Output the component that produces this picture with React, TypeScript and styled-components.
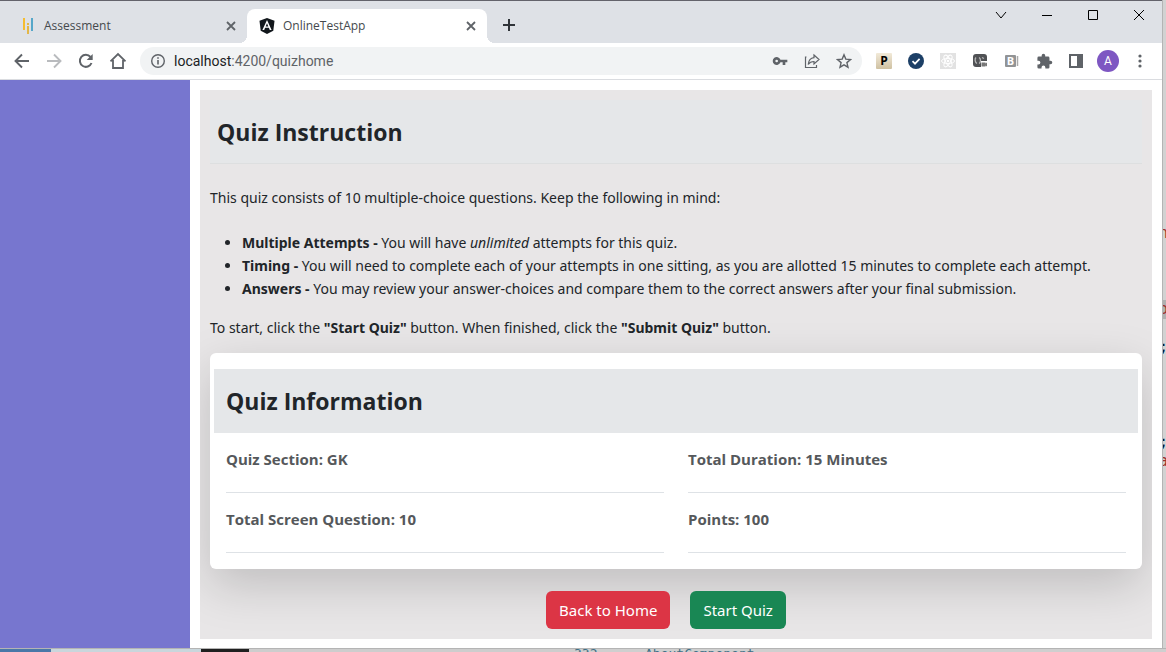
import React from "react";
import styled, { createGlobalStyle } from "styled-components";

const Global = createGlobalStyle`
  *, *::before, *::after { box-sizing: border-box; }
  html, body { margin: 0; padding: 0; }
  body {
    background: #cfcfcf;
    color: #212529;
    font-family: "Open Sans", "Noto Sans", sans-serif;
    font-size: 14px;
  }
  button, input { font: inherit; }
`;

const Desktop = styled.div`
  min-height: 100vh;
  display: grid;
  grid-template-columns: minmax(0, 1fr) 4px;
  grid-template-rows: 1fr 4px;
`;

const BrowserWindow = styled.div`
  display: flex;
  flex-direction: column;
  min-width: 0;
  background: #fff;
  border-top: 1px solid #63636b;
`;

const CodeEdge = styled.div`
  overflow: hidden;
  padding-top: 224px;
  background: #d2d2d2;
  border-left: 1px solid #b4b4b4;
  font: 15px/19px "DejaVu Sans Mono", monospace;
`;

const CodeLine = styled.div<{ $color?: string; $marked?: boolean }>`
  height: 19px;
  text-indent: -4px;
  white-space: nowrap;
  color: ${(p) => p.$color ?? "#001a33"};
  background: ${(p) => (p.$marked ? "#b0b0b0" : "transparent")};
`;

const BottomEdge = styled.div`
  grid-column: 1 / -1;
  display: flex;
  height: 4px;
  overflow: hidden;
  border-top: 1px solid #b4b4b4;
  color: #3f6f86;
  font: 13px/10px "DejaVu Sans Mono", monospace;
`;

const EdgeSegment = styled.div<{ $width: number; $color: string }>`
  flex: 0 0 ${(p) => p.$width}px;
  background: ${(p) => p.$color};
`;

const EdgeText = styled.span<{ $width: number }>`
  flex: 0 0 ${(p) => p.$width}px;
  white-space: nowrap;
`;

const TabStrip = styled.div`
  display: flex;
  height: 42px;
  padding-top: 8px;
  background: #dee1e6;
`;

const Tab = styled.div<{ $active?: boolean }>`
  position: relative;
  display: flex;
  align-items: center;
  gap: 8px;
  width: ${(p) => (p.$active ? 240 : 247)}px;
  padding: 0 8px 0 ${(p) => (p.$active ? 12 : 20)}px;
  border-radius: 8px 8px 0 0;
  background: ${(p) => (p.$active ? "#fff" : "transparent")};
  color: #45494d;
  font-size: 12px;
  line-height: 16px;

  ${(p) =>
    p.$active &&
    `
    &::before, &::after {
      content: "";
      position: absolute;
      bottom: 0;
      width: 8px;
      height: 8px;
    }
    &::before { left: -8px; background: radial-gradient(circle at 0 0, transparent 8px, #fff 8px); }
    &::after { right: -8px; background: radial-gradient(circle at 100% 0, transparent 8px, #fff 8px); }
  `}
`;

const TabTitle = styled.span`
  flex: 1;
`;

const IconButton = styled.button<{ $size?: number }>`
  display: flex;
  align-items: center;
  justify-content: center;
  flex: none;
  width: ${(p) => p.$size ?? 32}px;
  height: ${(p) => p.$size ?? 32}px;
  padding: 0;
  border: 0;
  background: none;
  color: #5f6368;

  &:disabled { color: #b9bbbe; }
`;

const NewTab = styled(IconButton)`
  margin-left: 6px;
  color: #303439;
`;

const WindowControls = styled.div`
  display: flex;
  align-items: center;
  gap: 14px;
  height: 28px;
  margin: -8px 7px 0 auto;

  button { color: #000; }
`;

const Toolbar = styled.div`
  display: flex;
  align-items: center;
  height: 37px;
  padding: 0 6px;
  border-bottom: 1px solid #dadce0;
`;

const AddressBar = styled.div`
  display: flex;
  flex: 1;
  align-items: center;
  min-width: 0;
  height: 28px;
  margin: 0 6px;
  padding: 0 2px 0 4px;
  border-radius: 14px;
  background: #f1f3f4;
  font-family: Roboto, sans-serif;
  font-size: 14px;
  line-height: 20px;
`;

const Host = styled.label`
  padding-left: 2px;
  color: #202124;
`;

const AddressInput = styled.input`
  flex: 1;
  min-width: 0;
  padding: 0;
  border: 0;
  outline: 0;
  background: none;
  color: #5f6368;
`;

const Avatar = styled.span`
  display: flex;
  align-items: center;
  justify-content: center;
  width: 22px;
  height: 22px;
  border-radius: 50%;
  background: #7e57c2;
  color: #fff;
  font: 12px/22px Roboto, sans-serif;
`;

const Page = styled.div`
  display: flex;
  flex: 1;
`;

const Sidebar = styled.aside`
  flex: 0 0 190px;
  background: #7776cf;
`;

const Main = styled.main`
  flex: 1;
  min-width: 0;
  margin: 10px 10px 9px;
  padding: 10px;
  overflow: hidden;
  background: #e8e6e7;
`;

const Heading = styled.h1`
  margin: 0;
  font-size: 23px;
  line-height: 32px;
  font-weight: 700;
`;

const InstructionHeader = styled.header`
  padding: 16px 7px 15px;
  background: #e5e7e9;
  border-bottom: 1px solid #dddfe0;
`;

const Instructions = styled.section`
  padding-top: 22px;
  font-family: "Noto Sans", sans-serif;
  font-size: 14px;
  line-height: 23px;
`;

const Paragraph = styled.p`
  margin: 0;
`;

const RuleList = styled.ul`
  margin: 22px 0 16px;
  padding-left: 32px;
`;

const InfoCard = styled.section`
  margin-top: 14px;
  padding: 16px 4px;
  border-radius: 6px;
  background: #fff;
  box-shadow: 0 16px 48px rgba(0, 0, 0, 0.175);
`;

const InfoHeader = styled.header`
  padding: 16px 12px;
  background: #e5e7e9;
`;

const InfoGrid = styled.div`
  display: grid;
  grid-template-columns: 1fr 1fr;
  column-gap: 24px;
  padding: 0 12px;
`;

const InfoItem = styled.div`
  height: 60px;
  padding-top: 14px;
  border-bottom: 1px solid #dee2e6;
  color: #55585b;
  font-size: 15px;
  line-height: 24px;
  font-weight: 700;
`;

const Actions = styled.div`
  display: flex;
  justify-content: center;
  padding-top: 22px;
`;

const ActionButton = styled.button<{ $color: string }>`
  height: 38px;
  margin-right: 20px;
  padding: 0 13px;
  border: 0;
  border-radius: 6px;
  background: ${(p) => p.$color};
  color: #fff;
  font-family: "Noto Sans", sans-serif;
  font-size: 15px;
`;

const stroke = { fill: "none", stroke: "currentColor" } as const;

const CloseTab = () => (
  <svg width="16" height="16" viewBox="0 0 16 16" {...stroke} strokeWidth="1.8">
    <path d="M4 4l8 8M12 4l-8 8" />
  </svg>
);

const extensions = [
  {
    label: "P extension",
    icon: (
      <svg width="16" height="16" viewBox="0 0 16 16">
        <defs>
          <linearGradient id="tan" x2="0" y2="1">
            <stop stopColor="#f2ead9" />
            <stop offset="1" stopColor="#cfc1a2" />
          </linearGradient>
        </defs>
        <rect width="16" height="16" rx="1" fill="url(#tan)" />
        <text x="8" y="12" textAnchor="middle" fontFamily="Open Sans, sans-serif" fontSize="12" fontWeight="700">P</text>
      </svg>
    ),
  },
  {
    label: "Check extension",
    icon: (
      <svg width="16" height="16" viewBox="0 0 16 16">
        <circle cx="8" cy="8" r="8" fill="#1c3f66" />
        <path d="M4.5 8.2l2.5 2.500 4.600-4.800" fill="none" stroke="#fff" strokeWidth="1.7" />
      </svg>
    ),
  },
  {
    label: "React tools",
    icon: (
      <svg width="16" height="16" viewBox="0 0 16 16" fill="none">
        <rect width="16" height="16" fill="#e2e2e2" />
        <g stroke="#fff" strokeWidth="1">
          <ellipse cx="8" cy="8" rx="6.500" ry="2.600" />
          <ellipse cx="8" cy="8" rx="6.500" ry="2.600" transform="rotate(60 8 8)" />
          <ellipse cx="8" cy="8" rx="6.500" ry="2.600" transform="rotate(120 8 8)" />
        </g>
        <circle cx="8" cy="8" r="1.300" fill="#fff" />
      </svg>
    ),
  },
  {
    label: "Recorder",
    icon: (
      <svg width="16" height="16" viewBox="0 0 16 16">
        <rect x="1" y="1" width="14" height="13" rx="3" fill="#505255" />
        <path d="M4 4.500C2.500 6 3 9.500 5 10.500M7 4.500c2 1 2 5 0 6M10 4.500l2 1" fill="none" stroke="#b8b8b8" strokeWidth="1.300" />
        <path d="M9 8h7v7H9z" fill="#fff" />
        <path d="M9.500 9.500h4v1l1.500-1v4l-1.500-1v1h-4z" fill="#777" />
      </svg>
    ),
  },
  {
    label: "B extension",
    icon: (
      <svg width="16" height="16" viewBox="0 0 16 16">
        <rect x="1" y="2" width="11" height="12" rx="1" fill="#929496" />
        <path d="M13.500 3v10" stroke="#aaa" strokeWidth="1.500" />
        <text x="6.500" y="12" textAnchor="middle" fontFamily="Open Sans, sans-serif" fontSize="11" fontWeight="700" fill="#fff">B</text>
      </svg>
    ),
  },
  {
    label: "Extensions",
    icon: (
      <svg width="17" height="17" viewBox="0 0 24 24" fill="currentColor">
        <path d="M20.500 11H19V7a2 2 0 0 0-2-2h-4V3.500a2.500 2.500 0 0 0-5 0V5H4a2 2 0 0 0-2 2v3.800h1.500a2.700 2.700 0 0 1 0 5.400H2V20a2 2 0 0 0 2 2h3.800v-1.500a2.700 2.700 0 0 1 5.400 0V22H17a2 2 0 0 0 2-2v-4h1.500a2.500 2.500 0 0 0 0-5z" />
      </svg>
    ),
  },
  {
    label: "Side panel",
    icon: (
      <svg width="16" height="16" viewBox="0 0 16 16">
        <path d="M1 1h14v14H1zM3 3v10h6V3z" fill="currentColor" fillRule="evenodd" />
      </svg>
    ),
  },
];

const facts = ["Quiz Section: GK", "Total Duration: 15 Minutes", "Total Screen Question: 10", "Points: 100"];

const codeLines: { text: string; color?: string; marked?: boolean }[] = [
  { text: "n", color: "#a0302c" },
  { text: "" },
  { text: "" },
  { text: "" },
  { text: "o", color: "#a0302c", marked: true },
  { text: "" },
  { text: ";" },
  { text: "" },
  { text: "" },
  { text: "" },
  { text: "" },
  { text: ";" },
  { text: "a", color: "#a0302c" },
];

export default function App() {
  return (
    <>
      <Global />
      <Desktop>
        <BrowserWindow>
          <TabStrip>
            <Tab>
              <svg width="16" height="18" viewBox="0 0 16 18" fill="none" strokeWidth="2">
                <path d="M4 1v12" stroke="#f5bd31" />
                <path d="M8 6v2M8 9v8" stroke="#e3b748" />
                <path d="M12 1v13" stroke="#56a7c9" />
              </svg>
              <TabTitle>Assessment</TabTitle>
              <IconButton $size={16} aria-label="Close Assessment"><CloseTab /></IconButton>
            </Tab>
            <Tab $active>
              <svg width="16" height="16" viewBox="0 0 16 16">
                <path d="M8 0l7.500 2.700-1.200 10L8 16l-6.300-3.300-1.200-10z" fill="#12171c" />
                <path d="M8 2L3.400 12h1.800l.9-2.200h3.800l.9 2.200h1.800zM8 5.200l1.300 3.200H6.700z" fill="#fff" fillRule="evenodd" />
              </svg>
              <TabTitle>OnlineTestApp</TabTitle>
              <IconButton $size={16} aria-label="Close OnlineTestApp"><CloseTab /></IconButton>
            </Tab>
            <NewTab aria-label="New tab">
              <svg width="14" height="14" viewBox="0 0 14 14" {...stroke} strokeWidth="2">
                <path d="M7 1v12M1 7h12" />
              </svg>
            </NewTab>
            <WindowControls>
              <IconButton aria-label="Search tabs">
                <svg width="12" height="12" viewBox="0 0 12 12" {...stroke}><path d="M1 3l5 6 5-6" /></svg>
              </IconButton>
              <IconButton aria-label="Minimize">
                <svg width="12" height="12" viewBox="0 0 12 12" {...stroke}><path d="M1 6.500h10" /></svg>
              </IconButton>
              <IconButton aria-label="Maximize">
                <svg width="12" height="12" viewBox="0 0 12 12" {...stroke}><path d="M1.500 1.500h9v9h-9z" /></svg>
              </IconButton>
              <IconButton aria-label="Close window">
                <svg width="12" height="12" viewBox="0 0 12 12" {...stroke}><path d="M1 1l10 10M11 1L1 11" /></svg>
              </IconButton>
            </WindowControls>
          </TabStrip>

          <Toolbar>
            <IconButton aria-label="Back">
              <svg width="16" height="16" viewBox="0 0 16 16" {...stroke} strokeWidth="1.900"><path d="M15 8H2M8 1.500L1.500 8 8 14.500" /></svg>
            </IconButton>
            <IconButton aria-label="Forward" disabled>
              <svg width="16" height="16" viewBox="0 0 16 16" {...stroke} strokeWidth="1.900"><path d="M1 8h13M8 1.500L14.500 8 8 14.500" /></svg>
            </IconButton>
            <IconButton aria-label="Reload">
              <svg width="16" height="16" viewBox="0 0 16 16" {...stroke} strokeWidth="2">
                <path d="M13.500 10A6 6 0 1 1 12.500 4" />
                <path d="M14.700 1v6H8.700z" fill="currentColor" stroke="none" />
              </svg>
            </IconButton>
            <IconButton aria-label="Home">
              <svg width="18" height="18" viewBox="0 0 18 18" {...stroke} strokeWidth="1.800"><path d="M1.500 9.300L9 2l7.500 7.300M4 8v8h10V8" /></svg>
            </IconButton>
            <AddressBar>
              <IconButton $size={28} aria-label="Site information">
                <svg width="16" height="16" viewBox="0 0 16 16" {...stroke} strokeWidth="1.400">
                  <circle cx="8" cy="8" r="6.300" />
                  <path d="M8 7v4.500M8 4.300v1.500" strokeWidth="1.600" />
                </svg>
              </IconButton>
              <Host htmlFor="address">localhost</Host>
              <AddressInput id="address" type="text" defaultValue=":4200/quizhome" />
              <IconButton aria-label="Passwords">
                <svg width="16" height="16" viewBox="0 0 24 24" fill="currentColor">
                  <path fillRule="evenodd" d="M12.700 10A6 6 0 1 0 12.700 14H16v4h4v-4h3v-4zM7 14a2 2 0 1 1 0-4 2 2 0 0 1 0 4z" />
                </svg>
              </IconButton>
              <IconButton aria-label="Share">
                <svg width="16" height="16" viewBox="0 0 16 16" {...stroke} strokeWidth="1.200">
                  <path d="M2.500 4H1.500v10.500h11V12M10 2l5 4.500-5 4.500V8.500c-3 0-4.500 1-5.800 3C4.500 8 6.500 5 10 4.600z" />
                </svg>
              </IconButton>
              <IconButton aria-label="Bookmark">
                <svg width="16" height="16" viewBox="0 0 16 16" {...stroke} strokeWidth="1.400">
                  <path d="M8 1.800l1.800 4.300 4.700.4-3.600 3.100 1.100 4.600L8 11.800l-4 2.400 1.100-4.600-3.600-3.100 4.700-.4z" />
                </svg>
              </IconButton>
            </AddressBar>
            {extensions.map((e) => (
              <IconButton key={e.label} aria-label={e.label}>{e.icon}</IconButton>
            ))}
            <IconButton aria-label="Profile"><Avatar>A</Avatar></IconButton>
            <IconButton aria-label="Menu">
              <svg width="4" height="16" viewBox="0 0 4 16" fill="currentColor">
                <circle cx="2" cy="3" r="1.600" /><circle cx="2" cy="8" r="1.600" /><circle cx="2" cy="13" r="1.600" />
              </svg>
            </IconButton>
          </Toolbar>

          <Page>
            <Sidebar />
            <Main>
              <InstructionHeader><Heading>Quiz Instruction</Heading></InstructionHeader>
              <Instructions>
                <Paragraph>This quiz consists of 10 multiple-choice questions. Keep the following in mind:</Paragraph>
                <RuleList>
                  <li><strong>Multiple Attempts -</strong> You will have <em>unlimited</em> attempts for this quiz.</li>
                  <li><strong>Timing -</strong> You will need to complete each of your attempts in one sitting, as you are allotted 15 minutes to complete each attempt.</li>
                  <li><strong>Answers -</strong> You may review your answer-choices and compare them to the correct answers after your final submission.</li>
                </RuleList>
                <Paragraph>To start, click the <strong>"Start Quiz"</strong> button. When finished, click the <strong>"Submit Quiz"</strong> button.</Paragraph>
              </Instructions>
              <InfoCard>
                <InfoHeader><Heading as="h2">Quiz Information</Heading></InfoHeader>
                <InfoGrid>
                  {facts.map((f) => <InfoItem key={f}>{f}</InfoItem>)}
                </InfoGrid>
              </InfoCard>
              <Actions>
                <ActionButton $color="#dc3545">Back to Home</ActionButton>
                <ActionButton $color="#198754">Start Quiz</ActionButton>
              </Actions>
            </Main>
          </Page>
        </BrowserWindow>
        <CodeEdge aria-hidden>
          {codeLines.map((l, i) => (
            <CodeLine key={i} $color={l.color} $marked={l.marked}>{l.text}</CodeLine>
          ))}
        </CodeEdge>
        <BottomEdge aria-hidden>
          <EdgeSegment $width={51} $color="#4a78a8" />
          <EdgeSegment $width={150} $color="#c9d6dc" />
          <EdgeSegment $width={48} $color="#1f1f1f" />
          <EdgeSegment $width={325} $color="#cdcdcd" />
          <EdgeText $width={71}>332</EdgeText>
          <EdgeText $width={120}>AboutComponent</EdgeText>
        </BottomEdge>
      </Desktop>
    </>
  );
}
